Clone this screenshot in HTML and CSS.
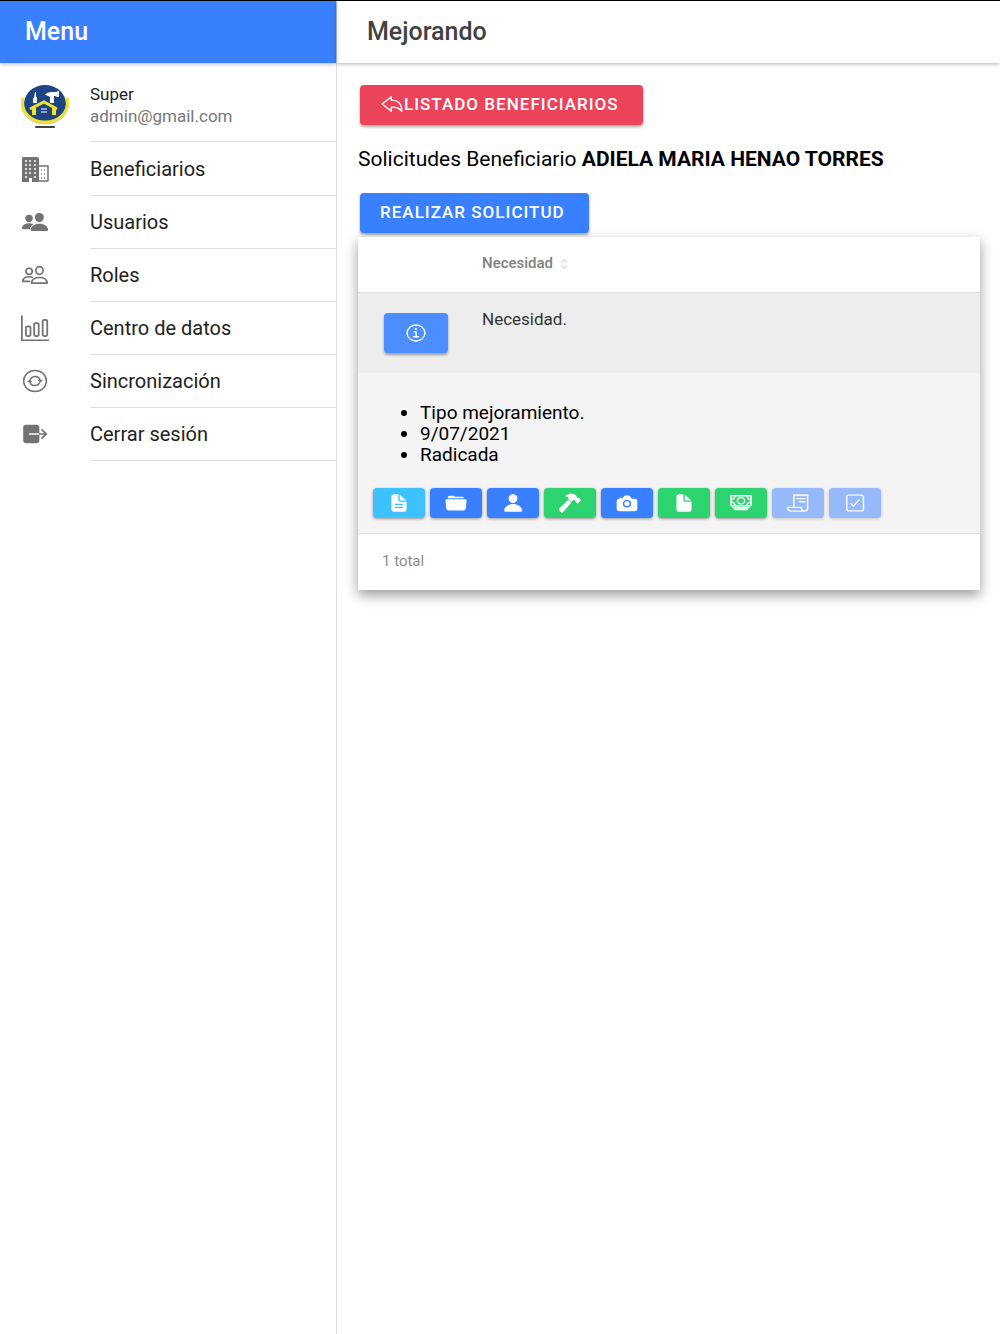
FILE: index.html
```html
<!DOCTYPE html>
<html lang="es">
<head>
    <meta charset="UTF-8">
    <meta name="viewport" content="width=device-width, initial-scale=1">
    <title>Mejorando</title>
    <link rel="stylesheet" href="styles.css">
</head>
<body>
    <div class="app">
        <aside class="sidebar">
            <header class="toolbar toolbar-primary">
                <h2>Menu</h2>
            </header>
            <nav>
                <div class="user">
                    <svg class="avatar" viewBox="0 0 48 46" aria-hidden="true">
                        <ellipse cx="24" cy="20" rx="21" ry="19" fill="#1f4484"/>
                        <path d="M2 14C-2 28 10 39 24 39s26-11 22-25" fill="none" stroke="#c9cdb0" stroke-width="3"/>
                        <path d="M2 14C-1 28 10 38 24 38s25-10 22-24" fill="none" stroke="#efe32c" stroke-width="3"/>
                        <path d="M9 25l14-7 13 7" fill="none" stroke="#efe32c" stroke-width="3"/>
                        <path d="M13 24v7M33 24v7" fill="none" stroke="#efe32c" stroke-width="4"/>
                        <path d="M20 25h6M20 28h6" stroke="#fff" stroke-width="1"/>
                        <path d="M24 11c2-3 5-3 9-3h2l2-1h1v6h-2l-2-1h-1v7h-4v-6c-2-1-3-2-5-2z" fill="#fff"/>
                        <path d="M14 8h1v5h1v6h-4v-5h1z" fill="#fff"/>
                        <path d="M15 43h18" stroke="#444" stroke-width="2" stroke-linecap="round"/>
                    </svg>
                    <div class="user-data">
                        <div>Super</div>
                        <div class="mail">admin@gmail.com</div>
                    </div>
                </div>
                <a class="item" href="#">
                    <svg viewBox="0 0 28 26" preserveAspectRatio="none" fill="#737373" aria-hidden="true">
                        <path d="M2 1h14q2 0 2 2v23h-7v-4H8v4H1V3q0-2 1-2z"/>
                        <path d="M18 10h9v15h-9" fill="none" stroke="#737373" stroke-width="1.500" stroke-linejoin="round"/>
                        <path d="M4 5h2M8 5h2M13 5h2M4 9h2M8 9h2M13 9h2M4 13h2M8 13h2M13 13h2M4 17h2M8 17h2M13 17h2M4 21h2M13 21h2" stroke="#fff" stroke-width="1.400"/>
                        <path d="M20 14h1M23 14h1M20 18h1M23 18h1M20 22h1M23 22h1" stroke="#737373" stroke-width="1.500"/>
                    </svg>
                    <span>Beneficiarios</span>
                </a>
                <a class="item" href="#">
                    <svg viewBox="0 0 512 512" preserveAspectRatio="none" fill="#737373" aria-hidden="true">
                        <path d="M336 256c-20.560 0-40.440-9.180-56-25.840-15.130-16.250-24.370-37.920-26-61-1.740-24.620 5.770-47.260 21.140-63.760S312 80 336 80c23.830 0 45.380 9.060 60.700 25.520 15.470 16.620 23 39.220 21.260 63.630-1.670 23.110-10.900 44.770-26 61C376.440 246.820 356.570 256 336 256zM467.830 432H204.180a27.710 27.710 0 01-22-10.670 30.220 30.220 0 01-5.260-25.790c8.420-33.810 29.280-61.850 60.320-81.080C264.790 297.400 299.860 288 336 288c36.850 0 71 9 98.710 26.050 31.110 19.130 52 47.330 60.380 81.550a30.270 30.270 0 01-5.320 25.780A27.680 27.680 0 01467.830 432zM147 260c-35.190 0-66.130-32.720-69-72.930-1.420-20.600 5-39.650 18-53.620 12.860-13.830 31-21.450 51-21.450s38 7.660 50.930 21.570c13.100 14.080 19.500 33.090 18 53.520C213.060 227.290 182.130 260 147 260zM212.660 291.450c-17.590-8.600-40.420-12.900-65.650-12.900-29.460 0-58.070 7.680-80.570 21.620-25.510 15.830-42.670 38.880-49.600 66.710a27.390 27.390 0 004.790 23.360A25.320 25.320 0 0041.720 400h111a8 8 0 007.870-6.570c.11-.63.25-1.260.41-1.880 8.480-34.060 28.350-62.840 57.710-83.820a8 8 0 00-.63-13.390c-1.570-.92-3.370-1.890-5.420-2.890z"/>
                    </svg>
                    <span>Usuarios</span>
                </a>
                <a class="item" href="#">
                    <svg viewBox="0 0 512 512" preserveAspectRatio="none" fill="none" stroke="#737373" stroke-width="32" aria-hidden="true">
                        <ellipse cx="338" cy="168" rx="66" ry="76"/>
                        <path d="M336 304c-66 0-129 32-144 97-2 9 3 15 12 15h264c9 0 14-7 12-15-16-65-79-97-144-97z"/>
                        <path d="M206 183c-3 35-29 62-58 62s-56-27-58-62c-2-36 23-61 58-61s60 26 58 61zM206 302c-18-8-38-12-59-12-53 0-103 26-116 78-2 7 3 14 10 14h113" stroke-linecap="round"/>
                    </svg>
                    <span>Roles</span>
                </a>
                <a class="item" href="#">
                    <svg viewBox="0 0 512 512" preserveAspectRatio="none" fill="none" stroke="#737373" stroke-width="32" stroke-linecap="round" aria-hidden="true">
                        <path d="M16 20v476h484"/>
                        <rect x="90" y="224" width="84" height="192" rx="32"/>
                        <rect x="240" y="160" width="84" height="256" rx="32"/>
                        <rect x="396" y="96" width="84" height="320" rx="32"/>
                    </svg>
                    <span>Centro de datos</span>
                </a>
                <a class="item" href="#">
                    <svg viewBox="0 0 512 512" preserveAspectRatio="none" fill="none" stroke="#737373" stroke-width="28" stroke-linecap="round" aria-hidden="true">
                        <ellipse cx="256" cy="256" rx="208" ry="208"/>
                        <path d="M174 218c18-34 48-51 84-51 48 0 84 31 92 78M338 294c-18 34-48 51-84 51-48 0-84-31-92-78"/>
                        <path d="M112 276l48-56 48 56zM304 236l48 56 48-56z" fill="#737373" stroke="none"/>
                    </svg>
                    <span>Sincronización</span>
                </a>
                <a class="item" href="#">
                    <svg viewBox="0 0 512 512" preserveAspectRatio="none" aria-hidden="true">
                        <rect x="40" y="76" width="296" height="360" rx="56" fill="#737373"/>
                        <path d="M160 256h176" stroke="#fff" stroke-width="32" stroke-linecap="round"/>
                        <path d="M336 256h128M384 176l80 80-80 80" fill="none" stroke="#737373" stroke-width="32" stroke-linecap="round" stroke-linejoin="round"/>
                    </svg>
                    <span>Cerrar sesión</span>
                </a>
            </nav>
        </aside>

        <main class="main">
            <header class="toolbar">
                <h1>Mejorando</h1>
            </header>
            <div class="content">
                <button class="btn btn-danger" type="button">
                    <svg viewBox="0 0 512 512" preserveAspectRatio="none" fill="none" stroke="#fff" stroke-width="30" stroke-linejoin="round" aria-hidden="true">
                        <path d="M240 424v-96c116 0 160 12 224 96 0-144-40-256-224-256V88L48 256z"/>
                    </svg>LISTADO BENEFICIARIOS
                </button>
                <p class="title">Solicitudes Beneficiario <b>ADIELA MARIA HENAO TORRES</b></p>
                <button class="btn btn-primary" type="button">REALIZAR SOLICITUD</button>

                <table class="card">
                    <thead>
                        <tr>
                            <th class="col-action"></th>
                            <th>Necesidad
                                <svg class="sort" viewBox="0 0 8 12" fill="none" stroke="#b5b5b5" aria-hidden="true">
                                    <path d="M1 4l3-3 3 3M1 8l3 3 3-3"/>
                                </svg>
                            </th>
                        </tr>
                    </thead>
                    <tbody>
                        <tr class="row">
                            <td class="col-action">
                                <button class="btn btn-info" type="button" aria-label="Información">
                                    <svg viewBox="0 0 512 512" preserveAspectRatio="none" fill="none" stroke="#fff" stroke-width="34" aria-hidden="true">
                                        <ellipse cx="256" cy="256" rx="208" ry="204"/>
                                        <path d="M212 228h48v116M200 352h112" stroke-width="36" stroke-linecap="round"/>
                                        <circle cx="252" cy="156" r="28" fill="#fff" stroke="none"/>
                                    </svg>
                                </button>
                            </td>
                            <td>Necesidad.</td>
                        </tr>
                        <tr class="detail">
                            <td colspan="2">
                                <ul>
                                    <li>Tipo mejoramiento.</li>
                                    <li>9/07/2021</li>
                                    <li>Radicada</li>
                                </ul>
                                <div class="actions">
                                    <button class="btn-sm sky" type="button" aria-label="Documento">
                                        <svg viewBox="0 0 512 512" preserveAspectRatio="none" fill="#fff" aria-hidden="true">
                                            <path d="M428 224H288a48 48 0 01-48-48V36a4 4 0 00-4-4h-92a64 64 0 00-64 64v320a64 64 0 0064 64h224a64 64 0 0064-64V228a4 4 0 00-4-4zm-92 160H176a16 16 0 010-32h160a16 16 0 010 32zm0-80H176a16 16 0 010-32h160a16 16 0 010 32z"/>
                                            <path d="M419 188L276 45a2 2 0 00-4 2v129a16 16 0 0016 16h129a2 2 0 002-4z"/>
                                        </svg>
                                    </button>
                                    <button class="btn-sm blue" type="button" aria-label="Carpeta">
                                        <svg viewBox="0 0 512 512" preserveAspectRatio="none" fill="#fff" aria-hidden="true">
                                            <path d="M64 136a56 56 0 0156-64h70c12 0 22 4 31 10l20 14h150a56 56 0 0157 40z"/>
                                            <path d="M42 160h428a32 32 0 0132 36l-20 200a56 56 0 01-56 52H86a56 56 0 01-56-52L10 196a32 32 0 0132-36z"/>
                                        </svg>
                                    </button>
                                    <button class="btn-sm blue" type="button" aria-label="Persona">
                                        <svg viewBox="0 0 512 512" preserveAspectRatio="none" fill="#fff" aria-hidden="true">
                                            <path d="M332 64c-19-21-46-32-76-32s-57 11-76 32-29 49-26 80c4 61 50 112 102 112s98-50 102-112c2-31-7-59-26-80zM432 480H80a31 31 0 01-24-11c-6-8-9-19-7-30 9-49 37-90 80-119 38-26 86-40 135-40s89 14 127 40c43 29 71 70 80 119 2 11-1 22-7 30a31 31 0 01-32 11z"/>
                                        </svg>
                                    </button>
                                    <button class="btn-sm green" type="button" aria-label="Obra">
                                        <svg viewBox="0 0 66 56" preserveAspectRatio="none" fill="#fff" aria-hidden="true">
                                            <path d="M20 8C30-1 44 0 52 8l2 6 6-1 6 7-10 10-6-5-1-5-6-1-6 6-9-8c1-5-3-7-8-7z"/>
                                            <path d="M28 19l9 8-25 27q-3 3-6 0l-5-5q-3-3 0-6z"/>
                                        </svg>
                                    </button>
                                    <button class="btn-sm blue" type="button" aria-label="Fotos">
                                        <svg viewBox="0 0 512 512" preserveAspectRatio="none" fill="#fff" aria-hidden="true">
                                            <path fill-rule="evenodd" d="M432 144h-59c-3 0-6-2-9-5l-32-50C321 74 312 64 296 64h-80c-16 0-27 10-36 25l-32 50c-2 3-5 5-9 5v-8a16 16 0 00-16-16H96a16 16 0 00-16 16v8a64 64 0 00-64 64v192a64 64 0 0064 64h352a64 64 0 0064-64V208a64 64 0 00-64-64zM256 368a96 96 0 110-192 96 96 0 010 192z"/>
                                            <circle cx="256" cy="272" r="60"/>
                                        </svg>
                                    </button>
                                    <button class="btn-sm green" type="button" aria-label="Archivo">
                                        <svg viewBox="0 0 512 512" preserveAspectRatio="none" fill="#fff" aria-hidden="true">
                                            <path d="M428 224H288a48 48 0 01-48-48V36a4 4 0 00-4-4h-92a64 64 0 00-64 64v320a64 64 0 0064 64h224a64 64 0 0064-64V228a4 4 0 00-4-4z"/>
                                            <path d="M419 188L276 45a2 2 0 00-4 2v129a16 16 0 0016 16h129a2 2 0 002-4z"/>
                                        </svg>
                                    </button>
                                    <button class="btn-sm green" type="button" aria-label="Pagos">
                                        <svg viewBox="0 0 512 512" preserveAspectRatio="none" fill="none" stroke="#fff" stroke-width="36" stroke-linecap="round" aria-hidden="true">
                                            <rect x="22" y="70" width="468" height="256" rx="16"/>
                                            <path d="M72 378h368M112 424h288"/>
                                            <ellipse cx="256" cy="198" rx="84" ry="80"/>
                                            <path d="M490 166a96 96 0 01-96-96M22 166a96 96 0 0096-96M490 230a96 96 0 00-96 96M22 230a96 96 0 0196 96"/>
                                        </svg>
                                    </button>
                                    <button class="btn-sm blue" type="button" aria-label="Recibo" disabled>
                                        <svg viewBox="0 0 512 512" preserveAspectRatio="none" fill="none" stroke="#fff" stroke-width="36" stroke-linecap="round" stroke-linejoin="round" aria-hidden="true">
                                            <path d="M160 336V48l32 16 32-16 32 16 32-16 32 16 32-16 32 16 32-16 32 16 32-16v344c0 40-32 72-72 72s-72-32-72-72v-24H32c-8 0-16 4-16 16 0 56 17 80 72 80h320M224 144h192M288 224h128"/>
                                        </svg>
                                    </button>
                                    <button class="btn-sm blue" type="button" aria-label="Aprobar" disabled>
                                        <svg viewBox="0 0 512 512" preserveAspectRatio="none" fill="none" stroke="#fff" stroke-width="36" stroke-linecap="round" stroke-linejoin="round" aria-hidden="true">
                                            <path d="M352 176L218 336l-58-64"/>
                                            <rect x="64" y="54" width="388" height="404" rx="48"/>
                                        </svg>
                                    </button>
                                </div>
                            </td>
                        </tr>
                    </tbody>
                    <tfoot>
                        <tr>
                            <td colspan="2">1 total</td>
                        </tr>
                    </tfoot>
                </table>
            </div>
        </main>
    </div>
</body>
</html>
```

FILE: styles.css
```css
* {
    box-sizing: border-box;
}
body {
    margin: 0;
    font-family: Roboto, sans-serif;
    font-size: 20px;
    color: #000;
    background-color: #fff;
}
.app {
    display: flex;
    min-height: 100vh;
    border-top: 1px solid #000;
}

/* menu lateral */
.sidebar {
    flex: none;
    width: 337px;
    border-right: 1px solid #dedede;
}
.toolbar {
    display: flex;
    align-items: center;
    height: 62px;
    padding: 0 30px;
    color: #424242;
    box-shadow: 0 1px 4px rgba(0, 0, 0, 0.3);
}
.toolbar h1, .toolbar h2 {
    margin: 0;
    font-size: 25px;
    font-weight: 500;
    line-height: 28px;
}
.toolbar-primary {
    padding: 0 25px;
    background-color: #3880ff;
    color: #fff;
}
.user {
    display: flex;
    height: 79px;
}
.avatar {
    flex: none;
    width: 48px;
    height: 46px;
    margin: 21px 21px 0;
}
.user-data {
    flex: 1;
    padding-top: 20px;
    border-bottom: 1px solid #dedede;
    font-size: 17px;
    line-height: 22px;
    color: #222;
}
.mail {
    color: #777;
}
.item {
    display: flex;
    align-items: center;
    height: 53px;
    padding-left: 21px;
    color: #222;
    text-decoration: none;
}
.item svg {
    flex: none;
    width: 28px;
    height: 26px;
    margin-right: 41px;
}
.item span {
    flex: 1;
    padding-top: 2px;
    line-height: 51px;
    border-bottom: 1px solid #dedede;
}

/* contenido */
.main {
    flex: 1;
    min-width: 0;
}
.content {
    padding: 22px 20px 20px 21px;
}
.btn {
    display: flex;
    align-items: center;
    height: 40px;
    margin: 0 2px;
    padding: 0 24px 2px 20px;
    border: none;
    border-radius: 4px;
    color: #fff;
    font-family: inherit;
    font-size: 17px;
    font-weight: 500;
    letter-spacing: 0.06em;
    box-shadow: 0 2px 3px rgba(0, 0, 0, 0.35);
    cursor: pointer;
}
.btn svg {
    width: 24px;
    height: 22px;
}
.btn-danger {
    background-color: #eb445a;
}
.btn-primary {
    background-color: #3880ff;
}
.title {
    margin: 22px 0;
    font-size: 21px;
    line-height: 24px;
}
.card {
    width: 100%;
    margin-top: 4px;
    border-collapse: collapse;
    background-color: #fff;
    box-shadow: 0 5px 12px rgba(0, 0, 0, 0.4);
}
th, td {
    padding: 0;
    text-align: left;
    vertical-align: top;
}
thead th {
    height: 55px;
    padding-top: 17px;
    border-bottom: 1px solid #dedede;
    color: #808080;
    font-size: 15px;
    font-weight: 500;
    line-height: 18px;
}
.col-action {
    width: 124px;
}
.sort {
    width: 7px;
    height: 10px;
    margin-left: 4px;
    vertical-align: -1px;
}
.row td {
    height: 81px;
    padding-top: 15px;
    background-color: #ededed;
    color: #333;
    font-size: 17px;
    line-height: 22px;
}
.row .col-action {
    padding: 20px 24px;
}
.btn-info {
    width: 64px;
    padding: 0;
    justify-content: center;
    background-color: #4c8dff;
}
.btn-info svg {
    flex: none;
    width: 22px;
    height: 20px;
}
.detail td {
    padding: 29px 15px 15px;
    background-color: #f4f4f4;
}
.detail ul {
    margin: 0 0 23px;
    padding-left: 47px;
    font-size: 19px;
    line-height: 21px;
}
.actions {
    display: flex;
    flex-wrap: wrap;
    gap: 5px;
}
.btn-sm {
    display: flex;
    align-items: center;
    justify-content: center;
    width: 52px;
    height: 30px;
    padding: 0;
    border: none;
    border-radius: 4px;
    box-shadow: 0 1px 3px rgba(0, 0, 0, 0.4);
    cursor: pointer;
}
.btn-sm svg {
    width: 22px;
    height: 20px;
}
.btn-sm:disabled {
    opacity: 0.5;
    cursor: default;
}
.sky {
    background-color: #3dc2ff;
}
.blue {
    background-color: #3880ff;
}
.green {
    background-color: #2dd36f;
}
tfoot td {
    height: 56px;
    padding: 18px 24px;
    border-top: 1px solid #dedede;
    color: #8c8c8c;
    font-size: 15px;
    line-height: 18px;
}
```
